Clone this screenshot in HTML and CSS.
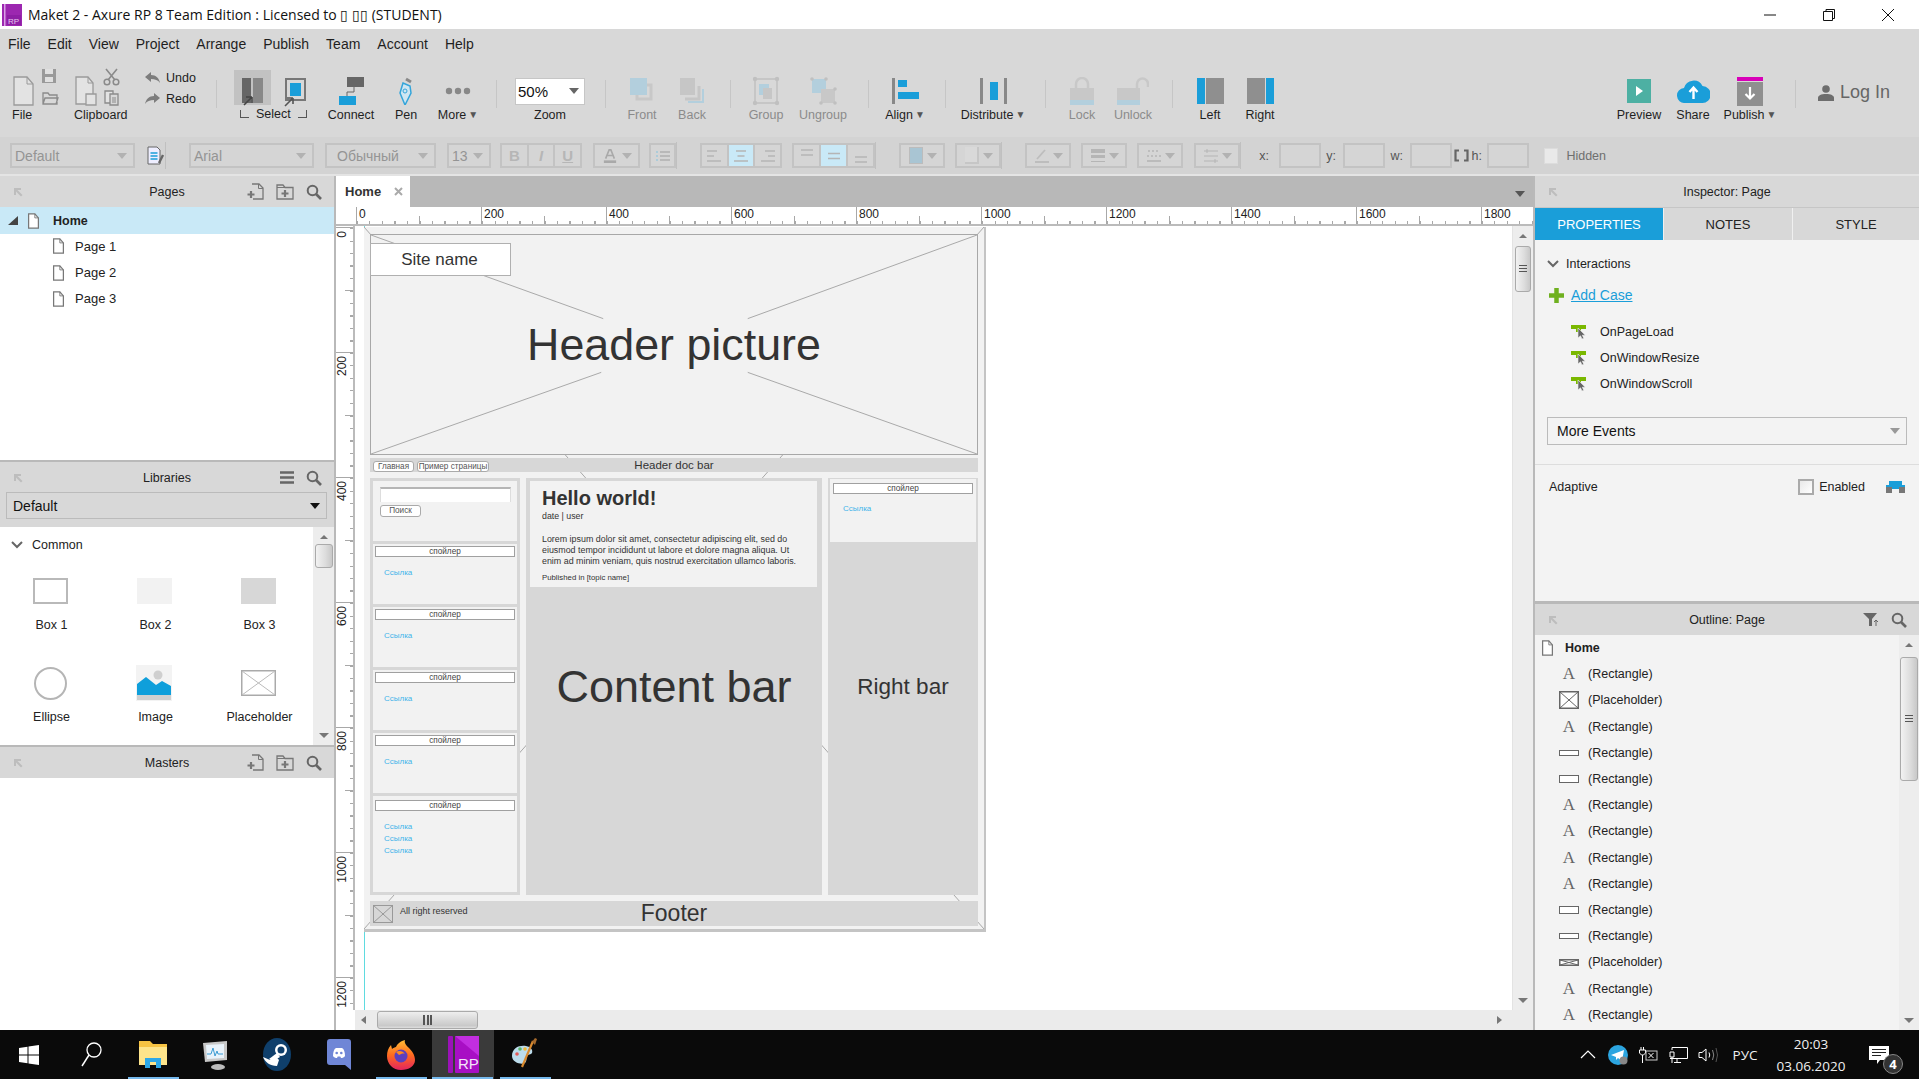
FILE: index.html
```html
<!DOCTYPE html>
<html lang="en">
<head>
<meta charset="utf-8">
<title>Maket 2 - Axure RP 8</title>
<link rel="stylesheet" href="styles.css">
</head>
<body>
<svg class="defs" width="0" height="0" aria-hidden="true">
  <symbol id="doc" viewBox="0 0 14 18"><path d="M1.500 1h7l4 4.500v11.500h-11z" fill="#fff" stroke="#777" stroke-width="1.400"/><path d="M8.500 1v4.500h4" fill="none" stroke="#777"/></symbol>
  <symbol id="pin" viewBox="0 0 12 12"><path d="M2 2h7v2H5.500l5 5-1.500 1.500-5-5V9H2z" fill="#bdbdbd"/></symbol>
  <symbol id="search" viewBox="0 0 16 16"><circle cx="6.500" cy="6.500" r="4.800" fill="none" stroke="#666" stroke-width="2"/><path d="M10 10l5 5" stroke="#666" stroke-width="2.600"/></symbol>
  <symbol id="newpage" viewBox="0 0 17 17"><path d="M5 1h7l4 4v11H6" fill="none" stroke="#777" stroke-width="1.300"/><path d="M11.500 1v4.500H16" fill="none" stroke="#777"/><path d="M4 8v7M.5 11.500h7" stroke="#777" stroke-width="2.200"/></symbol>
  <symbol id="newfolder" viewBox="0 0 18 16"><path d="M1 15V1h6l2 2.500h8V15z" fill="none" stroke="#777" stroke-width="1.300"/><path d="M1 3.500h8" stroke="#777"/><path d="M9 6v7M5.500 9.500h7" stroke="#777" stroke-width="2.200"/></symbol>
  <symbol id="evt" viewBox="0 0 16 16"><path d="M0 1h15v4h-5v3H5V5H0z" fill="#7ab800"/><path d="M7 4v10l2.500-2.200L11 15l1.800-.8-1.500-3h3z" fill="#666" stroke="#f3f3f3" stroke-width=".6"/></symbol>
  <symbol id="arrow-x" viewBox="0 0 35 26"><rect x=".75" y=".75" width="33.500" height="24.500" fill="none" stroke="#aaa" stroke-width="1.500"/><path d="M1 1l33 24M34 1L1 25" stroke="#bbb"/></symbol>
</svg>

<header class="titlebar">
  <svg class="app-logo" viewBox="0 0 20 22"><rect width="20" height="22" fill="#9c27b0"/><rect x="2" width="1.500" height="22" fill="#d9a1e6"/><rect x="5" y="11" width="14" height="10" fill="#8e1fa5"/><text x="6" y="20" font-family="Liberation Sans" font-size="8" fill="#e7c7ee">RP</text></svg>
  <span class="title-text">Maket 2 - Axure RP 8 Team Edition : Licensed to ▯ ▯▯ (STUDENT)</span>
  <div class="win-ctrls">
    <span class="win-btn"><svg width="14" height="14" viewBox="0 0 14 14"><path d="M1 7h12" stroke="#111"/></svg></span>
    <span class="win-btn"><svg width="14" height="14" viewBox="0 0 14 14"><path d="M1.500 3.500h9v9h-9z M4 3V1.500h8.500v9H11" fill="none" stroke="#111"/></svg></span>
    <span class="win-btn"><svg width="14" height="14" viewBox="0 0 14 14"><path d="M1 1l12 12M13 1L1 13" stroke="#111"/></svg></span>
  </div>
</header>

<nav class="menubar">
  <span>File</span><span>Edit</span><span>View</span><span>Project</span><span>Arrange</span><span>Publish</span><span>Team</span><span>Account</span><span>Help</span>
</nav>

<section class="toolbar">
  <div class="tool tool-start">
    <svg class="group-ico" width="66" height="38" viewBox="0 0 66 38"><path d="M14 9h13l6 7v21H14z" fill="#e3e3e3" stroke="#9a9a9a" stroke-width="1.300"/><path d="M27 9v7h6" fill="none" stroke="#9a9a9a"/><path d="M42 1h14v14H42z" fill="#9a9a9a"/><path d="M45 1h8v5h-8zM45 9h8v5h-8z" fill="#e0e0e0"/><path d="M43 36V25h5l1.500 2H57v9zM43 36l2-6h13l-2 6" fill="none" stroke="#8a8a8a" stroke-width="1.300"/></svg>
    <span class="tool-label label-file">File</span>
  </div>
  <div class="tool tool-start">
    <svg class="group-ico" width="74" height="38" viewBox="0 0 74 38"><path d="M10 9h12l5 6v21H10z" fill="#e3e3e3" stroke="#9a9a9a" stroke-width="1.300"/><path d="M22 9v6h5" fill="none" stroke="#9a9a9a"/><path d="M20 26h10v11H20z" fill="#e3e3e3" stroke="#9a9a9a" stroke-width="1.300"/><path d="M40 1l9 11M51 1l-9 11" stroke="#8a8a8a" stroke-width="1.600"/><circle cx="41" cy="14" r="2.800" fill="none" stroke="#8a8a8a" stroke-width="1.500"/><circle cx="50" cy="14" r="2.800" fill="none" stroke="#8a8a8a" stroke-width="1.500"/><path d="M39 23h8v12h-8z" fill="#e3e3e3" stroke="#8a8a8a" stroke-width="1.300"/><path d="M44 26h8v11h-8z" fill="#d8d8d8" stroke="#8a8a8a" stroke-width="1.300"/><path d="M46 30h4M46 32h4M46 34h4" stroke="#8a8a8a"/></svg>
    <span class="tool-label label-clip">Clipboard</span>
  </div>
  <div class="undo-col">
    <div class="undo-row"><svg width="15" height="12" viewBox="0 0 15 12"><path d="M0 5l6-5v3c5 0 8 3 9 8-2-3-5-4-9-4v3z" fill="#7d7d7d"/></svg><span>Undo</span></div>
    <div class="undo-row"><svg width="15" height="12" viewBox="0 0 15 12"><path d="M15 5L9 0v3c-5 0-8 3-9 8 2-3 5-4 9-4v3z" fill="#7d7d7d"/></svg><span>Redo</span></div>
  </div>
  <i class="tsep"></i>
  <div class="tool tool-select">
    <div class="sel-row">
      <span class="sel-active"><svg width="22" height="29" viewBox="0 0 22 29"><rect y="0" width="9" height="25" fill="#666"/><rect x="11" y="0" width="10" height="25" fill="#888"/><path d="M2 27l8-8M10 19v6M10 19H4" stroke="#444" stroke-width="1.600" fill="none"/></svg></span>
      <span class="sel-second"><svg width="22" height="29" viewBox="0 0 22 29"><path d="M2 1h19v21H2z" fill="#d8d8d8" stroke="#777" stroke-width="2"/><rect x="6" y="5" width="11" height="13" fill="#1a9ed9"/><path d="M1 28l8-8M9 20v6M9 20H3" stroke="#555" stroke-width="1.600" fill="none"/></svg></span>
    </div>
    <span class="tool-label label-select"><i class="crn crn-l"></i>Select<i class="crn crn-r"></i></span>
  </div>
  <div class="tool"><div class="tool-ico"><svg width="25" height="28" viewBox="0 0 25 28"><rect x="8" y="0" width="17" height="10" fill="#666"/><path d="M15 10v5H8v4" fill="none" stroke="#666"/><rect x="0" y="19" width="17" height="9" fill="#1a9ed9"/></svg></div><span class="tool-label">Connect</span></div>
  <div class="tool"><div class="tool-ico"><svg width="18" height="28" viewBox="0 0 18 28"><path d="M9 2l5 3" stroke="#888" stroke-width="3"/><path d="M6 6l7 3 1 7-6 12-5-12z" fill="#cfe6f2" stroke="#34a5da" stroke-width="1.500"/><circle cx="8" cy="14" r="2" fill="none" stroke="#34a5da"/></svg></div><span class="tool-label">Pen</span></div>
  <div class="tool"><div class="tool-ico"><svg width="26" height="8" viewBox="0 0 26 8"><circle cx="4" cy="4" r="3.200" fill="#888"/><circle cx="13" cy="4" r="3.200" fill="#888"/><circle cx="22" cy="4" r="3.200" fill="#888"/></svg></div><span class="tool-label">More<b class="caret">▼</b></span></div>
  <i class="tsep"></i>
  <div class="tool"><div class="tool-ico"><div class="zoom-box"><span>50%</span><i class="tri-down"></i></div></div><span class="tool-label">Zoom</span></div>
  <i class="tsep"></i>
  <div class="tool off"><div class="tool-ico"><svg width="26" height="28" viewBox="0 0 26 28"><rect x="1" y="1" width="17" height="17" fill="#b3cfdd"/><path d="M18 8h4v14H8v-4" fill="none" stroke="#c8c8c8" stroke-width="3"/></svg></div><span class="tool-label">Front</span></div>
  <div class="tool off"><div class="tool-ico"><svg width="26" height="28" viewBox="0 0 26 28"><rect x="1" y="1" width="15" height="17" fill="#c6c6c6"/><path d="M20 9v13H6" fill="none" stroke="#c6c6c6" stroke-width="3"/><path d="M24 12v13H9" fill="none" stroke="#b3cfdd" stroke-width="2"/></svg></div><span class="tool-label">Back</span></div>
  <i class="tsep"></i>
  <div class="tool off"><div class="tool-ico"><svg width="28" height="30" viewBox="0 0 28 30"><path d="M3 3h22v24H3z" fill="none" stroke="#c0c0c0" stroke-width="1.500"/><g fill="#c0c0c0"><circle cx="3" cy="3" r="2.200"/><circle cx="25" cy="3" r="2.200"/><circle cx="3" cy="27" r="2.200"/><circle cx="25" cy="27" r="2.200"/></g><rect x="7" y="8" width="10" height="11" fill="#b3cfdd"/><rect x="11" y="12" width="9" height="11" fill="#c6c6c6"/></svg></div><span class="tool-label">Group</span></div>
  <div class="tool off"><div class="tool-ico"><svg width="28" height="30" viewBox="0 0 28 30"><rect x="3" y="3" width="14" height="14" fill="#b3cfdd"/><rect x="12" y="13" width="14" height="14" fill="#c8c8c8"/><g fill="#c0c0c0"><circle cx="3" cy="3" r="1.800"/><circle cx="17" cy="3" r="1.800"/><circle cx="26" cy="13" r="1.800"/><circle cx="26" cy="27" r="1.800"/><circle cx="12" cy="27" r="1.800"/></g></svg></div><span class="tool-label">Ungroup</span></div>
  <i class="tsep"></i>
  <div class="tool"><div class="tool-ico"><svg width="27" height="26" viewBox="0 0 27 26"><rect width="3" height="26" fill="#888"/><rect x="6" y="2" width="9" height="7" fill="#1a9ed9"/><rect x="6" y="14" width="21" height="7" fill="#1a9ed9"/></svg></div><span class="tool-label">Align<b class="caret">▼</b></span></div>
  <i class="tsep"></i>
  <div class="tool"><div class="tool-ico"><svg width="27" height="26" viewBox="0 0 27 26"><rect width="3" height="26" fill="#888"/><rect x="24" width="3" height="26" fill="#888"/><rect x="10" y="4" width="8" height="18" fill="#1a9ed9"/></svg></div><span class="tool-label">Distribute<b class="caret">▼</b></span></div>
  <i class="tsep"></i>
  <div class="tool off"><div class="tool-ico"><svg width="24" height="28" viewBox="0 0 24 28"><path d="M6 12V7a6 6 0 0 1 12 0v5" fill="none" stroke="#c8c8c8" stroke-width="2.500"/><rect y="11" width="24" height="12" fill="#c8c8c8"/><rect y="23" width="24" height="5" fill="#b3cfdd"/></svg></div><span class="tool-label">Lock</span></div>
  <div class="tool off"><div class="tool-ico"><svg width="32" height="28" viewBox="0 0 32 28"><path d="M20 12V7a5.500 5.500 0 0 1 11 0v3" fill="none" stroke="#c8c8c8" stroke-width="2.500"/><rect y="11" width="23" height="12" fill="#c8c8c8"/><rect y="23" width="23" height="5" fill="#b3cfdd"/></svg></div><span class="tool-label">Unlock</span></div>
  <i class="tsep"></i>
  <div class="tool"><div class="tool-ico"><svg width="27" height="26" viewBox="0 0 27 26"><rect width="8" height="26" fill="#1a9ed9"/><rect x="9" width="18" height="26" fill="#8f8f8f"/></svg></div><span class="tool-label">Left</span></div>
  <div class="tool"><div class="tool-ico"><svg width="27" height="26" viewBox="0 0 27 26"><rect width="18" height="26" fill="#8f8f8f"/><rect x="19" width="8" height="26" fill="#1a9ed9"/></svg></div><span class="tool-label">Right</span></div>
  <span class="tool-gap"></span>
  <div class="tool"><div class="tool-ico"><svg width="24" height="24" viewBox="0 0 24 24"><rect width="24" height="24" fill="#4db0a3"/><path d="M9 7l7 5-7 5z" fill="#fff"/></svg></div><span class="tool-label">Preview</span></div>
  <div class="tool"><div class="tool-ico"><svg width="33" height="24" viewBox="0 0 33 24"><path d="M8 24a7.500 7.500 0 0 1-1-15A10 10 0 0 1 25.500 7 8.500 8.500 0 0 1 25 24z" fill="#1a9ed9"/><path d="M16.500 20v-11M12.500 13l4-4.500 4 4.500" fill="none" stroke="#fff" stroke-width="2.400"/></svg></div><span class="tool-label">Share</span></div>
  <div class="tool"><div class="tool-ico"><svg width="26" height="30" viewBox="0 0 26 30"><rect y="1" width="26" height="4" fill="#d800b8"/><rect y="6" width="26" height="24" fill="#8f8f8f"/><path d="M13 11v11M8.500 18l4.500 4.500 4.500-4.500" fill="none" stroke="#fff" stroke-width="2.200"/></svg></div><span class="tool-label">Publish<b class="caret">▼</b></span></div>
  <i class="tsep"></i>
  <div class="login"><svg width="16" height="16" viewBox="0 0 16 16"><circle cx="8" cy="4" r="3.800" fill="#6d6d6d"/><path d="M0 16v-3c0-2.500 3-4 8-4s8 1.500 8 4v3z" fill="#6d6d6d"/></svg><span>Log In</span></div>
</section>

<section class="formatbar">
  <div class="ctl w125"><span>Default</span><i class="tri-down tri-off"></i></div>
  <svg class="doc-ico" width="18" height="20" viewBox="0 0 18 20"><path d="M1 1h9l3 3v14H1z" fill="#eef" stroke="#666"/><path d="M3.500 7h7M3.500 10h7M3.500 13h7" stroke="#1a9ed9" stroke-width="1.500"/><path d="M12 17l4-8" stroke="#666" stroke-width="2.400"/></svg>
  <i class="fsep"></i>
  <div class="ctl w125"><span>Arial</span><i class="tri-down tri-off"></i></div>
  <div class="ctl w111"><span class="indent">Обычный</span><i class="tri-down tri-off"></i></div>
  <div class="ctl w44"><span>13</span><i class="tri-down tri-off"></i></div>
  <div class="seg w82"><b class="cell cell-b">B</b><b class="cell cell-i">I</b><b class="cell cell-u">U</b></div>
  <div class="ctl w47"><svg class="ico14" viewBox="0 0 14 16"><path d="M2 11L6 1h2l4 10M3.500 7.500h7" fill="none" stroke="#a9a9a9" stroke-width="1.800"/><rect y="13" width="14" height="3" fill="#a9a9a9"/></svg><i class="tri-down tri-off"></i></div>
  <div class="ctl w27 ctl-center"><svg class="ico14" viewBox="0 0 14 12"><path d="M4 2h10M4 6h10M4 10h10" stroke="#b0b0b0" stroke-width="1.500"/><path d="M0 2h2M0 6h2M0 10h2" stroke="#9fc9dc" stroke-width="1.500"/></svg></div>
  <i class="fsep"></i>
  <div class="seg w82">
    <span class="cell"><svg class="ico14" viewBox="0 0 14 14"><path d="M0 2h10M0 7h7M0 12h14" stroke="#b5b5b5" stroke-width="1.600"/></svg></span>
    <span class="cell cell-on"><svg class="ico14" viewBox="0 0 14 14"><path d="M2 2h10M3.500 7h7M0 12h14" stroke="#b5b5b5" stroke-width="1.600"/></svg></span>
    <span class="cell"><svg class="ico14" viewBox="0 0 14 14"><path d="M4 2h10M7 7h7M0 12h14" stroke="#b5b5b5" stroke-width="1.600"/></svg></span>
  </div>
  <div class="seg w83">
    <span class="cell"><svg class="ico14" viewBox="0 0 14 14"><path d="M1 1h12M1 6h12" stroke="#b5b5b5" stroke-width="1.600"/></svg></span>
    <span class="cell cell-on"><svg class="ico14" viewBox="0 0 14 14"><path d="M1 4.500h12M1 9.500h12" stroke="#b5b5b5" stroke-width="1.600"/></svg></span>
    <span class="cell"><svg class="ico14" viewBox="0 0 14 14"><path d="M1 8h12M1 13h12" stroke="#b5b5b5" stroke-width="1.600"/></svg></span>
  </div>
  <i class="fsep"></i>
  <div class="ctl w46"><span class="swatch swatch-fill"></span><i class="tri-down tri-off"></i></div>
  <div class="ctl w46"><span class="swatch swatch-shadow"></span><i class="tri-down tri-off"></i></div>
  <i class="fsep"></i>
  <div class="ctl w46"><svg class="ico14" viewBox="0 0 14 14"><path d="M2 10l8-9" stroke="#bdbdbd" stroke-width="1.800"/><rect y="12" width="14" height="2" fill="#bdbdbd"/></svg><i class="tri-down tri-off"></i></div>
  <div class="ctl w46"><svg class="ico14" viewBox="0 0 14 14"><rect width="14" height="4" fill="#b5b5b5"/><rect y="6" width="14" height="3" fill="#b5b5b5"/><rect y="12" width="14" height="1" fill="#b5b5b5"/></svg><i class="tri-down tri-off"></i></div>
  <div class="ctl w46"><svg class="ico14" viewBox="0 0 14 14"><path d="M1 2h12M0 7h14" stroke="#b5b5b5" stroke-width="1.600" stroke-dasharray="2 2"/><path d="M0 12h14" stroke="#b5b5b5" stroke-width="1.600"/></svg><i class="tri-down tri-off"></i></div>
  <div class="ctl w46"><svg class="ico14" viewBox="0 0 14 14"><path d="M0 2h14M0 7h14M0 12h14" stroke="#b5b5b5"/><path d="M3 0v4M11 10v4" stroke="#b5b5b5"/></svg><i class="tri-down tri-off"></i></div>
  <i class="fsep"></i>
  <span class="fl">x:</span><span class="num"></span>
  <span class="fl">y:</span><span class="num"></span>
  <span class="fl">w:</span><span class="num"></span>
  <svg class="lock-ico" width="15" height="13" viewBox="0 0 15 13"><path d="M5 1.500H1.500v10H5M10 1.500h3.500v10H10" fill="none" stroke="#666" stroke-width="2.200"/></svg>
  <span class="fl">h:</span><span class="num"></span>
  <span class="hid-check"></span>
  <span class="hid-label">Hidden</span>
</section>

<main class="workspace">
  <aside class="left-panel">
    <div class="pages-section">
      <div class="panel-head">
        <svg class="pin" viewBox="0 0 12 12"><use href="#pin"/></svg>
        <span class="panel-title">Pages</span>
        <span class="head-actions"><svg width="17" height="17"><use href="#newpage"/></svg><svg width="18" height="16"><use href="#newfolder"/></svg><svg width="16" height="16"><use href="#search"/></svg></span>
      </div>
      <div class="tree-row tree-home"><i class="tree-tri"></i><svg width="13" height="16"><use href="#doc"/></svg><b>Home</b></div>
      <div class="tree-row tree-child"><svg width="13" height="16"><use href="#doc"/></svg><span>Page 1</span></div>
      <div class="tree-row tree-child"><svg width="13" height="16"><use href="#doc"/></svg><span>Page 2</span></div>
      <div class="tree-row tree-child"><svg width="13" height="16"><use href="#doc"/></svg><span>Page 3</span></div>
    </div>
    <div class="lib-section">
      <div class="panel-head">
        <svg class="pin" viewBox="0 0 12 12"><use href="#pin"/></svg>
        <span class="panel-title">Libraries</span>
        <span class="head-actions"><svg width="14" height="13" viewBox="0 0 14 13"><path d="M0 1.500h14M0 6.500h14M0 11.500h14" stroke="#666" stroke-width="2.400"/></svg><svg width="16" height="16"><use href="#search"/></svg></span>
      </div>
      <div class="lib-select-wrap"><div class="lib-select"><span>Default</span><i class="tri-down tri-black"></i></div></div>
      <div class="lib-body">
        <div class="lib-list">
          <div class="lib-group"><svg width="12" height="8" viewBox="0 0 12 8"><path d="M1 1l5 5 5-5" fill="none" stroke="#666" stroke-width="2"/></svg><span>Common</span></div>
          <div class="widgets">
            <div class="widget"><span class="w-ico"><span class="box box1"></span></span><span class="w-name">Box 1</span></div>
            <div class="widget"><span class="w-ico"><span class="box box2"></span></span><span class="w-name">Box 2</span></div>
            <div class="widget"><span class="w-ico"><span class="box box3"></span></span><span class="w-name">Box 3</span></div>
            <div class="widget"><span class="w-ico"><span class="circle"></span></span><span class="w-name">Ellipse</span></div>
            <div class="widget"><span class="w-ico"><svg width="36" height="36" viewBox="0 0 36 36"><rect width="36" height="36" fill="#f3f3f3"/><rect x="1" y="30" width="34" height="5" fill="#d0d0d0"/><circle cx="22" cy="10" r="4.500" fill="#cfcfcf"/><path d="M1 30V19l9-7 10 8 6-4 9 5v9z" fill="#0f9fdb"/></svg></span><span class="w-name">Image</span></div>
            <div class="widget"><span class="w-ico"><svg width="35" height="26"><use href="#arrow-x"/></svg></span><span class="w-name">Placeholder</span></div>
          </div>
        </div>
        <div class="vscroll vscroll-lib"><i class="sb-up"></i><span class="thumb thumb-lib"></span><i class="sb-down"></i></div>
      </div>
    </div>
    <div class="panel-head masters-head">
      <svg class="pin" viewBox="0 0 12 12"><use href="#pin"/></svg>
      <span class="panel-title">Masters</span>
      <span class="head-actions"><svg width="17" height="17"><use href="#newpage"/></svg><svg width="18" height="16"><use href="#newfolder"/></svg><svg width="16" height="16"><use href="#search"/></svg></span>
    </div>
  </aside>

  <section class="center">
    <div class="tabbar"><div class="tab"><span>Home</span><svg width="9" height="9" viewBox="0 0 9 9"><path d="M1 1l7 7M8 1L1 8" stroke="#aaa" stroke-width="2"/></svg></div><i class="tri-down tab-tri"></i></div>
    <div class="ruler-top">
      <span class="rt"><span>0</span></span><span class="rt"><span>200</span></span><span class="rt"><span>400</span></span><span class="rt"><span>600</span></span><span class="rt"><span>800</span></span><span class="rt"><span>1000</span></span><span class="rt"><span>1200</span></span><span class="rt"><span>1400</span></span><span class="rt"><span>1600</span></span><span class="rt"><span>1800</span></span>
    </div>
    <div class="canvas-row">
      <div class="ruler-left">
        <span class="rl"><span>0</span></span><span class="rl"><span>200</span></span><span class="rl"><span>400</span></span><span class="rl"><span>600</span></span><span class="rl"><span>800</span></span><span class="rl"><span>1000</span></span><span class="rl"><span>1200</span></span>
      </div>
      <div class="canvas">
        <div class="guide"></div>
        <div class="artboard">
          <svg class="cross" viewBox="0 0 622 704" preserveAspectRatio="none"><path d="M0 0L622 704M622 0L0 704" stroke="#a8a8a8"/></svg>
          <div class="hero">
            <svg class="cross" viewBox="0 0 608 220" preserveAspectRatio="none"><path d="M0 0L233 84M608 0L378 84M0 220L231 138M608 220L378 138" stroke="#a8a8a8" fill="none"/></svg>
            <div class="site-name">Site name</div>
            <span class="big-label hero-label">Header picture</span>
          </div>
          <div class="docbar">
            <span class="crumb crumb-a">Главная</span><span class="crumb crumb-b">Пример страницы</span>
            <span class="docbar-label">Header doc bar</span>
          </div>
          <div class="columns">
            <div class="col-left">
              <div class="block block-search"><span class="search-input"></span><span class="search-btn">Поиск</span></div>
              <div class="block"><div class="spoiler">спойлер</div><a class="wlink">Ссылка</a></div>
              <div class="block"><div class="spoiler">спойлер</div><a class="wlink">Ссылка</a></div>
              <div class="block"><div class="spoiler">спойлер</div><a class="wlink">Ссылка</a></div>
              <div class="block"><div class="spoiler">спойлер</div><a class="wlink">Ссылка</a></div>
              <div class="block block-tall"><div class="spoiler">спойлер</div><a class="wlink">Ссылка</a><a class="wlink wlink-next">Ссылка</a><a class="wlink wlink-next">Ссылка</a></div>
            </div>
            <div class="col-center">
              <article class="card">
                <h1>Hello world!</h1>
                <p class="meta">date | user</p>
                <p class="lorem">Lorem ipsum dolor sit amet, consectetur adipiscing elit, sed do<br>eiusmod tempor incididunt ut labore et dolore magna aliqua. Ut<br>enim ad minim veniam, quis nostrud exercitation ullamco laboris.</p>
                <p class="pub">Published in [topic name]</p>
              </article>
              <span class="big-label center-label">Content bar</span>
            </div>
            <div class="col-right">
              <div class="block block-right"><div class="spoiler spoiler-right">спойлер</div><a class="wlink wlink-right">Ссылка</a></div>
              <span class="big-label right-label">Right bar</span>
            </div>
          </div>
          <div class="footer">
            <svg class="foot-ico" width="20" height="18" viewBox="0 0 20 18" preserveAspectRatio="none"><rect x=".5" y=".5" width="19" height="17" fill="#d7d7d7" stroke="#999"/><path d="M0 0l20 18M20 0L0 18" stroke="#999"/></svg>
            <span class="foot-note">All right reserved</span>
            <span class="big-label footer-label">Footer</span>
          </div>
        </div>
      </div>
      <div class="vscroll vscroll-main"><i class="sb-up"></i><span class="thumb thumb-main"></span><i class="sb-down"></i></div>
    </div>
    <div class="hscroll"><i class="sb-left"></i><span class="hthumb"></span><i class="sb-right"></i></div>
  </section>

  <aside class="right-panel">
    <div class="inspector">
      <div class="panel-head">
        <svg class="pin" viewBox="0 0 12 12"><use href="#pin"/></svg>
        <span class="panel-title">Inspector: Page</span>
        <span></span>
      </div>
      <div class="tabs"><span class="rtab rtab-on">PROPERTIES</span><span class="rtab">NOTES</span><span class="rtab">STYLE</span></div>
      <div class="insp-body">
        <div class="insp-group"><svg width="12" height="8" viewBox="0 0 12 8"><path d="M1 1l5 5 5-5" fill="none" stroke="#666" stroke-width="2"/></svg><span>Interactions</span></div>
        <div class="add-case"><svg width="15" height="15" viewBox="0 0 15 15"><path d="M7.500 0v15M0 7.500h15" stroke="#6fb01f" stroke-width="4.500"/></svg><a>Add Case</a></div>
        <div class="evt-row"><svg width="16" height="16"><use href="#evt"/></svg><span>OnPageLoad</span></div>
        <div class="evt-row"><svg width="16" height="16"><use href="#evt"/></svg><span>OnWindowResize</span></div>
        <div class="evt-row"><svg width="16" height="16"><use href="#evt"/></svg><span>OnWindowScroll</span></div>
        <div class="more-events"><span>More Events</span><i class="tri-down tri-off2"></i></div>
        <div class="adaptive">
          <span class="adaptive-name">Adaptive</span>
          <span class="check"></span><span class="enabled">Enabled</span>
          <svg width="19" height="13" viewBox="0 0 19 13"><path d="M3 0h13v4h3v8h-6V8H6v4H0V4h3z" fill="#1a9ed9"/><path d="M0 6h6v6H0zM13 6h6v6h-6z" fill="#777"/></svg>
        </div>
      </div>
    </div>
    <div class="outline">
      <div class="panel-head">
        <svg class="pin" viewBox="0 0 12 12"><use href="#pin"/></svg>
        <span class="panel-title">Outline: Page</span>
        <span class="head-actions"><svg width="16" height="13" viewBox="0 0 16 13"><path d="M0 0h14L9 6v7H6V6z" fill="#666"/><path d="M13 13V7M11 9l2-2 2 2" fill="none" stroke="#666"/></svg><svg width="16" height="16"><use href="#search"/></svg></span>
      </div>
      <div class="outline-body">
        <div class="outline-list">
          <div class="o-row o-home"><svg width="13" height="16"><use href="#doc"/></svg><b>Home</b></div>
          <div class="o-row"><span class="o-ico o-a">A</span><span>(Rectangle)</span></div>
          <div class="o-row"><span class="o-ico"><svg width="20" height="18" viewBox="0 0 20 18"><rect x=".75" y=".75" width="18.500" height="16.500" fill="#fff" stroke="#666" stroke-width="1.500"/><path d="M1 1l18 16M19 1L1 17" stroke="#666"/></svg></span><span>(Placeholder)</span></div>
          <div class="o-row"><span class="o-ico o-a">A</span><span>(Rectangle)</span></div>
          <div class="o-row"><span class="o-ico"><i class="o-rect o-thin"></i></span><span>(Rectangle)</span></div>
          <div class="o-row"><span class="o-ico"><i class="o-rect"></i></span><span>(Rectangle)</span></div>
          <div class="o-row"><span class="o-ico o-a">A</span><span>(Rectangle)</span></div>
          <div class="o-row"><span class="o-ico o-a">A</span><span>(Rectangle)</span></div>
          <div class="o-row"><span class="o-ico o-a">A</span><span>(Rectangle)</span></div>
          <div class="o-row"><span class="o-ico o-a">A</span><span>(Rectangle)</span></div>
          <div class="o-row"><span class="o-ico"><i class="o-rect"></i></span><span>(Rectangle)</span></div>
          <div class="o-row"><span class="o-ico"><i class="o-rect o-thin"></i></span><span>(Rectangle)</span></div>
          <div class="o-row"><span class="o-ico"><svg width="20" height="7" viewBox="0 0 20 7"><rect x=".75" y=".75" width="18.500" height="5.500" fill="#fff" stroke="#666" stroke-width="1.500"/><path d="M1 1l18 5M19 1L1 6" stroke="#666"/></svg></span><span>(Placeholder)</span></div>
          <div class="o-row"><span class="o-ico o-a">A</span><span>(Rectangle)</span></div>
          <div class="o-row"><span class="o-ico o-a">A</span><span>(Rectangle)</span></div>
        </div>
        <div class="vscroll vscroll-out"><i class="sb-up"></i><span class="thumb thumb-out"></span><i class="sb-down"></i></div>
      </div>
    </div>
  </aside>
</main>

<footer class="taskbar">
  <div class="task-apps">
    <span class="task"><svg width="20" height="20" viewBox="0 0 20 20"><path d="M0 3l8.500-1.300v7.700H0zM9.500 1.500L20 0v9.400H9.500zM0 10.500h8.500v7.800L0 17zM9.500 10.500H20V20L9.500 18.500z" fill="#fff"/></svg></span>
    <span class="task"><svg width="21" height="25" viewBox="0 0 21 25"><circle cx="13" cy="8" r="7" fill="none" stroke="#fff" stroke-width="1.300"/><path d="M8 13L1 24" stroke="#fff" stroke-width="1.500"/></svg></span>
    <span class="task task-run"><svg width="28" height="27" viewBox="0 0 28 27"><path d="M0 0h11l3 3h14v21H0z" fill="#f6c343"/><path d="M0 6h28v18H0z" fill="#fde48b"/><path d="M6 27V17h16v10h-5v-6h-6v6z" fill="#2da8e8"/></svg></span>
    <span class="task"><svg width="28" height="30" viewBox="0 0 28 30"><path d="M2 3l24-2v19L4 22z" fill="#c8c8c8"/><path d="M5 5l18-1v14L6 19z" fill="#e9f3fb"/><path d="M6 14h4l2-6 2 8 2-5 1 3h5" fill="none" stroke="#3b9bd3"/><ellipse cx="17" cy="27" rx="7" ry="3" fill="#bbb"/></svg></span>
    <span class="task"><svg width="28" height="33" viewBox="0 0 28 33"><ellipse cx="14" cy="16.500" rx="14" ry="16.500" fill="#0f3f6b"/><path d="M0 19l7 3a5 5 0 0 1 9 0l-2 6c-7 0-12-4-14-9z" fill="#fff"/><circle cx="18" cy="12" r="6" fill="#fff"/><circle cx="18" cy="12" r="3.500" fill="#0f3f6b"/><path d="M6 21l8-6 3 4-7 4z" fill="#fff"/></svg></span>
    <span class="task"><svg width="24" height="31" viewBox="0 0 24 31"><path d="M3 0h18a3 3 0 0 1 3 3v28l-6-5H3a3 3 0 0 1-3-3V3a3 3 0 0 1 3-3z" fill="#6f86d6"/><path d="M6 17c0-4 1-7 3-8h6c2 1 3 4 3 8-1 1.500-2.500 2-4 2l-.7-1.500h-2.600L10 19c-1.500 0-3-.5-4-2z" fill="#fff"/><circle cx="9.700" cy="14" r="1.300" fill="#6f86d6"/><circle cx="14.300" cy="14" r="1.300" fill="#6f86d6"/></svg></span>
    <span class="task task-run"><svg width="28" height="30" viewBox="0 0 28 30"><defs><linearGradient id="ff" x1="0" y1="0" x2="0" y2="1"><stop offset="0" stop-color="#ffbd35"/><stop offset=".5" stop-color="#ff6a1f"/><stop offset="1" stop-color="#e2245f"/></linearGradient></defs><path d="M14 30C6 30 0 24 0 16c0-4 1-8 4-11l1 4c1-1 3-2 4-2 1-3 5-6 9-7-1 3 1 5 4 8 3 3 6 7 6 12 0 6-6 10-14 10z" fill="url(#ff)"/><circle cx="14" cy="16" r="6.500" fill="#5b3fbf"/><path d="M9 12c3-2 7-1 9 2-2-1-4 0-6 1z" fill="#ff8a1f"/></svg></span>
    <span class="task task-active"><svg width="31" height="37" viewBox="0 0 31 37"><rect width="5" height="37" rx="1" fill="#9b12b8"/><rect x="7" width="24" height="37" rx="1" fill="#a80fc4"/><path d="M7 0h24v20z" fill="#c22ee0"/><text x="10" y="33" font-family="Liberation Sans" font-size="15" fill="#f4e3f9">RP</text></svg></span>
    <span class="task task-run"><svg width="28" height="33" viewBox="0 0 28 33"><path d="M1 18C1 10 8 7 15 8c5 1 7 4 6 7-1 2-4 1-5 3-1 3 0 5-2 7-3 2-13 0-13-7z" fill="#bcdcec"/><circle cx="6" cy="16" r="1.800" fill="#e25a5a"/><circle cx="9" cy="11" r="1.800" fill="#58b368"/><circle cx="14" cy="11" r="1.800" fill="#f0b93a"/><path d="M11 29L22 3" stroke="#d98a2f" stroke-width="2.200"/><path d="M21 4l3-4 2 1-2 6z" fill="#a66a2c"/></svg></span>
  </div>
  <div class="tray">
    <span class="tray-cell"><svg width="16" height="9" viewBox="0 0 16 9"><path d="M1 8l7-7 7 7" fill="none" stroke="#fff" stroke-width="1.200"/></svg></span>
    <span class="tray-cell"><svg width="20" height="20" viewBox="0 0 20 20"><circle cx="10" cy="10" r="10" fill="#2ca5e0"/><path d="M3 10l13-5-2 11-4-3-2 2v-3z" fill="#fff"/><circle cx="15.500" cy="15.500" r="4" fill="#888"/></svg></span>
    <span class="tray-cell"><svg width="20" height="16" viewBox="0 0 20 16"><path d="M3 0v3M5.500 0v3M1.500 3h6v3l-2 2H3.500l-2-2zM4.500 8v8" fill="none" stroke="#fff"/><rect x="8" y="4" width="11" height="9" fill="none" stroke="#ccc"/><path d="M10.500 6l5 5M15.500 6l-5 5" stroke="#fff"/></svg></span>
    <span class="tray-cell"><svg width="20" height="16" viewBox="0 0 20 16"><path d="M4 3V.5h15.500v11H2M2 5h4v5H2zM4 10v6M9 12v3M6 15.500h7" fill="none" stroke="#fff"/></svg></span>
    <span class="tray-cell"><svg width="20" height="14" viewBox="0 0 20 14"><path d="M1 4.500h3L8 1v12L4 9.500H1z" fill="none" stroke="#fff"/><path d="M11 4.500q1.500 2.500 0 5" fill="none" stroke="#fff"/><path d="M14.500 2q2.500 5 0 10" fill="none" stroke="#888"/><path d="M18 0q3 7 0 14" fill="none" stroke="#555"/></svg></span>
    <span class="tray-cell tray-lang">РУС</span>
    <span class="tray-cell tray-clock"><span>20:03</span><span>03.06.2020</span></span>
    <span class="tray-cell tray-notif"><svg width="20" height="18" viewBox="0 0 20 18"><path d="M0 0h20v14H11l-3 4v-4H0z" fill="#fff"/><path d="M3 3.500h14M3 6.500h14M3 9.500h9" stroke="#222"/></svg><span class="badge">4</span></span>
  </div>
</footer>
</body>
</html>
```

FILE: styles.css
```css
*{box-sizing:border-box}
html,body{margin:0;padding:0}
body{width:1919px;height:1079px;overflow:hidden;font-family:"Liberation Sans",Arial,sans-serif;font-size:13px;color:#222;background:#fff;display:flex;flex-direction:column}
i{display:block;font-style:normal}
.defs{position:absolute}
svg{display:block;flex:none}

.titlebar{height:29px;display:flex;align-items:center;background:#fff;flex:none}
.app-logo{width:20px;height:22px;margin-left:2px}
.title-text{margin-left:6px;font-family:"Open Sans","Noto Sans",sans-serif;font-size:14px;color:#111;white-space:nowrap}
.win-ctrls{margin-left:auto;display:flex;margin-right:2px}
.win-btn{width:58.670px;height:29px;display:flex;align-items:center;justify-content:center}

.menubar{height:29px;background:#d8d8d8;display:flex;align-items:center;flex:none;padding-left:8px;font-size:14px;color:#1f1f1f}
.menubar span{margin-right:17px}

.toolbar{height:79px;flex:none;background:#d8d8d8;display:grid;align-items:start;grid-template-columns:66px 74px 70px 12px 100px 58px 52px 52px 24px 84px 26px 48px 52px 24px 48px 66px 24px 50px 30px 66px 38px 36px 66px 12px 64px 36px 332px 58px 50px 64px 26px 1fr}
.tool{display:flex;flex-direction:column;align-items:center;padding-top:19px;height:79px;color:#1f1f1f}
.tool-start{align-items:flex-start;padding-top:11px}
.tool.off{color:#8b8b8b}
.tool-ico{height:30px;display:flex;align-items:center;justify-content:center;margin-top:-1px;margin-bottom:1px}
.tool-label{font-size:12.500px;line-height:16px;white-space:nowrap;display:flex;align-items:center}
.group-ico{height:38px;margin-top:-1px;margin-bottom:1px}
.label-file{margin-left:12px}
.label-clip{margin-left:8px}
.caret{font-size:10px;font-weight:400;color:#555;margin-left:2px}
.undo-col{padding-top:9px;display:flex;flex-direction:column;font-size:12.500px;color:#222}
.undo-row{height:21px;display:flex;align-items:center;gap:6px;padding-left:5px}
.tsep{width:1px;height:28px;background:#c6c6c6;margin-top:22px;justify-self:center}
.tool-select{align-items:flex-start;padding-top:13px}
.sel-row{display:flex;height:36px;margin-top:-1px}
.sel-active{width:37px;height:35px;margin-left:12px;background:#c2c2c2;display:flex;justify-content:center;padding-top:8px}
.sel-second{margin-left:13px;padding-top:8px}
.label-select{margin:0 0 0 18px;gap:7px}
.crn{width:9px;height:8px;border-bottom:1px solid #555}
.crn-l{border-left:1px solid #555}
.crn-r{border-right:1px solid #555}
.zoom-box{width:70px;height:27px;background:#fff;border:1px solid #c6c6c6;display:flex;align-items:center;justify-content:space-between;padding:0 5px 0 2px;font-size:15px;color:#111}
.tri-down{width:0;height:0;border-left:5px solid transparent;border-right:5px solid transparent;border-top:6px solid #666}
.tri-off{border-top-color:#b2b2b2}
.tri-off2{border-top-color:#999}
.tri-black{border-top-color:#111}
.login{display:flex;align-items:center;gap:6px;padding:24px 0 0 10px;font-size:18px;color:#666}

.formatbar{height:39px;flex:none;background:#d3d3d3;border-bottom:2px solid #e4e4e4;display:grid;align-items:center;justify-items:end;color:#8f8f8f;font-size:14px;grid-template-columns:135px 30px 13px 136px 122px 55px 91px 58px 36px 12px 94px 93px 13px 57px 56px 13px 57px 56px 56px 57px 13px 19px 49px 18px 46px 21px 46px 18px 15px 44px 29px 48px}
.ctl{height:25px;border:2px solid #c3c3c3;background:#d5d5d5;display:flex;align-items:center;justify-content:space-between;padding:0 6px 0 3px;color:#949494;white-space:nowrap}
.ctl-center{justify-content:center;padding:0}
.w125{width:125px}.w111{width:111px}.w44{width:44px}.w47{width:47px}.w46{width:46px}.w27{width:27px}
.indent{padding-left:7px}
.ico14{width:14px;height:14px;margin-left:5px}
.ctl-center .ico14{margin-left:0}
.fsep{width:1px;height:27px;background:#c0c0c0;justify-self:start}
.seg{height:25px;border:2px solid #c3c3c3;display:flex;background:#d5d5d5}
.w82{width:82px}.w83{width:83px}
.cell{flex:1;display:flex;align-items:center;justify-content:center;border-right:2px solid #c3c3c3;color:#b6b6b6;font-size:15px}
.cell:last-child{border-right:0}
.cell .ico14{margin:0}
.cell-i{font-style:italic}
.cell-u{text-decoration:underline}
.cell-on{background:#c9e9f7}
.swatch{width:14px;height:17px;margin-left:5px}
.swatch-fill{background:#a9c5d3;border:1px solid #bcbcbc}
.swatch-shadow{background:#d9d9d9;border-right:2px solid #c6c6c6;border-bottom:2px solid #c6c6c6}
.fl{font-size:12.500px;color:#555;margin-right:3px}
.num{width:42px;height:25px;border:2px solid #c3c3c3;background:#d5d5d5}
.lock-ico{margin-right:1px}
.hid-check{width:14px;height:16px;background:#e9e9e9;border:1px solid #dcdcdc}
.hid-label{font-size:12.500px;color:#6f6f6f}

.workspace{flex:1;display:flex;min-height:0}
.left-panel{width:336px;border-right:2px solid #b9b9b9;display:flex;flex-direction:column;background:#fff;flex:none}
.panel-head{height:31px;background:#d8d8d8;display:grid;grid-template-columns:1fr auto 1fr;align-items:center;flex:none;padding:0 12px}
.panel-title{font-size:12.500px;color:#222;white-space:nowrap}
.pin{width:12px;height:12px}
.head-actions{display:flex;align-items:center;justify-content:flex-end;gap:12px}
.pages-section{height:284px;flex:none}
.tree-row{height:26.400px;display:flex;align-items:center;font-size:13px;position:relative;top:-1px}
.tree-home{background:#c9e9f7;height:27px;padding-left:8px;top:0}
.tree-home svg{margin-left:9px}
.tree-home b{margin-left:13px;font-size:12.500px}
.tree-tri{width:0;height:0;border-left:10px solid transparent;border-bottom:9px solid #444}
.tree-child{padding-left:52px}
.tree-child span{margin-left:10px}
.lib-section{border-top:2px solid #b9b9b9;display:flex;flex-direction:column;flex:none}
.lib-select-wrap{background:#d8d8d8;padding:0 7px 8px 6px;margin-top:-1px}
.lib-select{height:27px;border:1px solid #bbb;display:flex;align-items:center;justify-content:space-between;padding:0 6px;font-size:14px;color:#111}
.lib-body{height:218px;display:flex;background:#fff}
.lib-list{flex:1;min-width:0}
.lib-group{height:36px;display:flex;align-items:center;gap:9px;padding-left:11px;font-size:12.500px}
.widgets{display:grid;grid-template-columns:repeat(3,104px);margin:8px 0 0 -2px;row-gap:30px}
.widget{display:flex;flex-direction:column;align-items:center;gap:6px;font-size:12.500px;line-height:16px}
.w-name{padding-left:3px}
.w-ico{height:40px;display:flex;align-items:center;justify-content:center}
.box{width:35px;height:26px;display:block}
.box1{background:#fff;border:2px solid #b9b9b9}
.box2{background:#f2f2f2}
.box3{background:#d7d7d7}
.circle{width:33px;height:33px;border:2px solid #b5b5b5;border-radius:50%;display:block}
.masters-head{border-top:2px solid #b9b9b9;height:33px}

.vscroll{width:21px;background:#ededed;display:flex;flex-direction:column;align-items:center;flex:none;position:relative}
.sb-up,.sb-down,.sb-left,.sb-right{width:0;height:0;border-style:solid;border-color:transparent}
.sb-up{border-width:0 4px 4px;border-bottom-color:#777;margin-top:8px}
.sb-down{border-width:5px 5px 0;border-top-color:#777;margin:auto 0 7px}
.thumb{display:flex;align-items:center;justify-content:center;width:18px;background:linear-gradient(to right,#f2f2f2,#dcdcdc 60%,#c8c8c8);border:1px solid #aaa;border-radius:3px}
.thumb-lib{height:24px;margin-top:5px}
.thumb-main{height:46px;margin-top:8px;width:16px}
.thumb-out{height:124px;margin-top:10px;width:18px}
.thumb-main::after,.thumb-out::after{content:"";width:8px;height:9px;background:repeating-linear-gradient(to bottom,#555 0 1px,transparent 1px 3px)}

section.center{flex:1;min-width:0;display:flex;flex-direction:column}
.tabbar{height:31px;background:#b8b8b8;display:flex;align-items:center;flex:none;padding-right:8px;justify-content:space-between}
.tab{width:74px;height:31px;background:#fff;display:flex;align-items:center;gap:13px;padding-left:9px;font-size:13px;font-weight:700;color:#333}
.tab-tri{margin-top:4px;border-top-color:#555}
.ruler-top{height:19px;display:flex;flex:none;padding-left:20px;overflow:hidden;border-bottom:2px solid #bbb;background:#fff}
.rt{width:125px;flex:none;height:100%;border-left:1px solid #a8a8a8;font-size:12px;color:#222;padding-left:2px;line-height:14px;position:relative;background:repeating-linear-gradient(to right,#a8a8a8 0 1px,transparent 1px 12.500px) left bottom/100% 3px no-repeat}
.rt::after{content:"";position:absolute;left:62px;bottom:0;width:1px;height:8px;background:#a8a8a8}
.canvas-row{flex:1;display:flex;min-height:0}
.ruler-left{width:19px;flex:none;border-right:2px solid #bbb;overflow:hidden;background:#fff;padding-top:1px}
.rl{display:block;height:125px;border-top:1px solid #a8a8a8;position:relative;font-size:12px;color:#222;background:repeating-linear-gradient(to bottom,#a8a8a8 0 1px,transparent 1px 12.500px) right top/3px 100% no-repeat}
.rl::after{content:"";position:absolute;top:62px;right:0;height:1px;width:8px;background:#a8a8a8}
.rl span{position:absolute;left:0;top:3px;writing-mode:vertical-rl;transform:rotate(180deg);line-height:13px}
.canvas{flex:1;position:relative;min-width:0;overflow:hidden;background:#fff}
.guide{position:absolute;left:9px;top:0;bottom:0;width:1px;background:#5fdbe0}
.artboard{position:absolute;left:9px;top:1px;width:622px;height:705px;background:#f2f2f2;border-right:2px solid #c4c4c4;border-bottom:3px solid #c4c4c4;padding:7px 6px 0 6px;display:flex;flex-direction:column;color:#333}
.cross{position:absolute;inset:0;width:100%;height:100%}
.hero{height:221px;border:1px solid #a8a8a8;position:relative;flex:none;background:#f2f2f2;display:flex;align-items:center;justify-content:center}
.site-name{position:absolute;left:-1px;top:8px;width:141px;height:33px;background:#fff;border:1px solid #b0b0b0;font-size:17px;display:flex;align-items:center;justify-content:center;color:#333;padding-right:2px}
.big-label{font-size:45px;color:#333;white-space:nowrap}
.hero-label{position:relative;font-size:44.800px}
.docbar{height:14px;margin-top:3px;background:#d7d7d7;position:relative;display:flex;align-items:center;flex:none;padding:2px 0 0 3px;gap:3px}
.crumb{height:11px;background:#fff;border:1px solid #aaa;border-radius:3px;font-size:8.200px;line-height:9px;text-align:center;color:#555;white-space:nowrap}
.crumb-a{width:41px}
.crumb-b{width:72px}
.docbar-label{position:absolute;left:0;right:0;top:1px;text-align:center;font-size:11.500px;line-height:13px}
.columns{height:417px;margin-top:6px;display:flex;gap:6px;position:relative;flex:none}
.col-left{width:150px;background:#d7d7d7;padding:3px;display:flex;flex-direction:column;gap:3px}
.block{background:#f2f2f2;height:60px;padding:2px;flex:none}
.block-tall{height:96px;padding-top:4px}
.block-search{padding:6px 6px 0 7px;display:flex;flex-direction:column;align-items:flex-start;gap:3px}
.search-input{width:131px;height:15px;background:#fff;border-top:2px solid #b5b5b5;border-left:1px solid #ddd;border-right:1px solid #ddd;display:block}
.search-btn{width:41px;height:12px;background:#fff;border:1px solid #aaa;border-radius:3px;font-size:8.200px;line-height:10px;text-align:center;color:#555}
.spoiler{height:11px;background:#fff;border:1px solid #a0a0a0;font-size:8.200px;line-height:9px;text-align:center;color:#444}
.wlink{display:block;margin:10px 0 0 9px;font-size:8px;line-height:12px;color:#41b4ea}
.wlink-next{margin-top:0}
.col-center{width:296px;background:#d7d7d7;padding:3px 5px 0 4px;position:relative;display:flex;flex-direction:column;align-items:stretch}
.center-label,.right-label{position:absolute;inset:0;display:flex;align-items:center;justify-content:center}
.card{height:106px;background:#f2f2f2;padding:6px 12px 0;color:#333}
.card h1{margin:0;font-size:20px;line-height:22px;font-weight:700}
.meta{margin:2px 0 0;font-size:8.800px;line-height:11px}
.lorem{margin:12px 0 0;font-size:8.900px;line-height:11px;white-space:nowrap}
.pub{margin:6px 0 0;font-size:7.800px;line-height:10px}
.col-right{width:150px;background:#d7d7d7;padding:1px 2px 0;position:relative}
.block-right{height:63px;padding:4px 3px 0}
.spoiler-right{width:140px}
.wlink-right{margin:9px 0 0 10px}
.right-label{font-size:22.500px}
.footer{height:25px;margin-top:6px;background:#d7d7d7;position:relative;display:flex;align-items:flex-start;flex:none;padding:4px 0 0 3px}
.foot-note{margin:0 0 0 7px;font-size:9px;line-height:12px;color:#333}
.footer-label{position:absolute;inset:0;display:flex;align-items:center;justify-content:center;font-size:23px}
.vscroll-main{border-left:1px solid #e3e3e3}
.hscroll{height:20px;flex:none;margin-left:19px;background:#ebebeb;display:flex;align-items:center;position:relative;padding:0 0 0 6px}
.sb-left{border-width:4px 5px 4px 0;border-right-color:#777}
.hthumb{width:101px;height:18px;margin-left:11px;display:flex;align-items:center;justify-content:center;background:linear-gradient(to bottom,#eee,#c9c9c9 85%,#ddd);border:1px solid #aaa;border-radius:3px}
.hthumb::after{content:"";width:9px;height:10px;background:repeating-linear-gradient(to right,#555 0 2px,transparent 2px 3.500px)}
.sb-right{border-width:4px 0 4px 5px;border-left-color:#777;margin-left:auto;margin-right:31px}

.right-panel{width:386px;flex:none;border-left:2px solid #b9b9b9;display:flex;flex-direction:column;background:#f3f3f3}
.right-panel .panel-head{padding:0 12px}
.inspector{height:425px;flex:none;display:flex;flex-direction:column}
.tabs{display:grid;grid-template-columns:128px 128px 1fr;height:33px;flex:none;border-top:1px solid #c6c6c6;background:#f0f0f0;gap:1px}
.rtab{display:flex;align-items:center;justify-content:center;background:#d8d8d8;font-size:13px;color:#222}
.rtab-on{background:#1a9ed9;color:#fff}
.insp-body{padding:16px 12px 0;display:flex;flex-direction:column}
.insp-group{display:flex;align-items:center;gap:7px;height:16px;font-size:12.500px}
.add-case{display:flex;align-items:center;gap:7px;height:16px;margin-top:15px;padding-left:2px;font-size:14px;color:#1a9ed9}
.add-case a{text-decoration:underline}
.evt-row{height:26px;display:flex;align-items:center;gap:13px;padding-left:24px;font-size:12.500px}
.add-case + .evt-row{margin-top:16px}
.more-events{height:28px;margin-top:20px;border:1px solid #bbb;display:flex;align-items:center;justify-content:space-between;padding:0 6px 0 9px;font-size:14px;color:#111}
.adaptive{margin:19px -12px 0;padding:14px 14px 0 14px;border-top:1px solid #ddd;display:flex;align-items:center;font-size:12.500px}
.adaptive-name{margin-right:auto}
.check{width:16px;height:16px;border:2px solid #aaa;background:linear-gradient(135deg,#e8e8e8,#fff);margin-right:5px}
.enabled{margin-right:21px}
.outline{flex:1;border-top:3px solid #b9b9b9;display:flex;flex-direction:column;min-height:0}
.outline-body{flex:1;display:flex;min-height:0;background:#f3f3f3}
.outline-list{flex:1;overflow:hidden}
.o-row{height:26.200px;display:flex;align-items:center;padding-left:24px;font-size:12.500px;gap:9px}
.o-home{padding-left:6px;gap:11px}
.o-ico{width:20px;display:flex;align-items:center;justify-content:center}
.o-a{font-family:"Liberation Serif",serif;font-size:17px;color:#666}
.o-rect{width:20px;height:8px;border:1.500px solid #666;background:#fff}
.o-thin{height:6px}
.vscroll-out{width:20px}

.taskbar{height:49px;background:#0a0a0a;flex:none;display:flex;color:#f0f0f0;position:relative}
.task-apps{display:flex;margin-left:-2px}
.task{width:62px;height:49px;display:flex;align-items:center;justify-content:center;position:relative}
.task-run::after{content:"";position:absolute;left:6px;right:5px;bottom:0;height:2px;background:#76b9ed}
.task-active{background:#3a3a3a}
.task-active::after{content:"";position:absolute;left:0;right:1px;bottom:0;height:2px;background:#76b9ed}
.tray{margin-left:auto;display:grid;grid-template-columns:30px 30px 29px 31px 30px 44px 88px 48px;padding-right:16px;font-family:"Open Sans","Noto Sans",sans-serif;font-size:13.500px}
.tray-cell{display:flex;align-items:center;justify-content:center;height:49px}
.tray-clock{flex-direction:column;line-height:22px;white-space:nowrap}
.tray-notif{position:relative}
.badge{position:absolute;left:28px;top:24px;width:20px;height:20px;border-radius:50%;background:#333;border:1px solid #888;display:flex;align-items:center;justify-content:center;font-size:13px;font-weight:700;color:#fff}
```
